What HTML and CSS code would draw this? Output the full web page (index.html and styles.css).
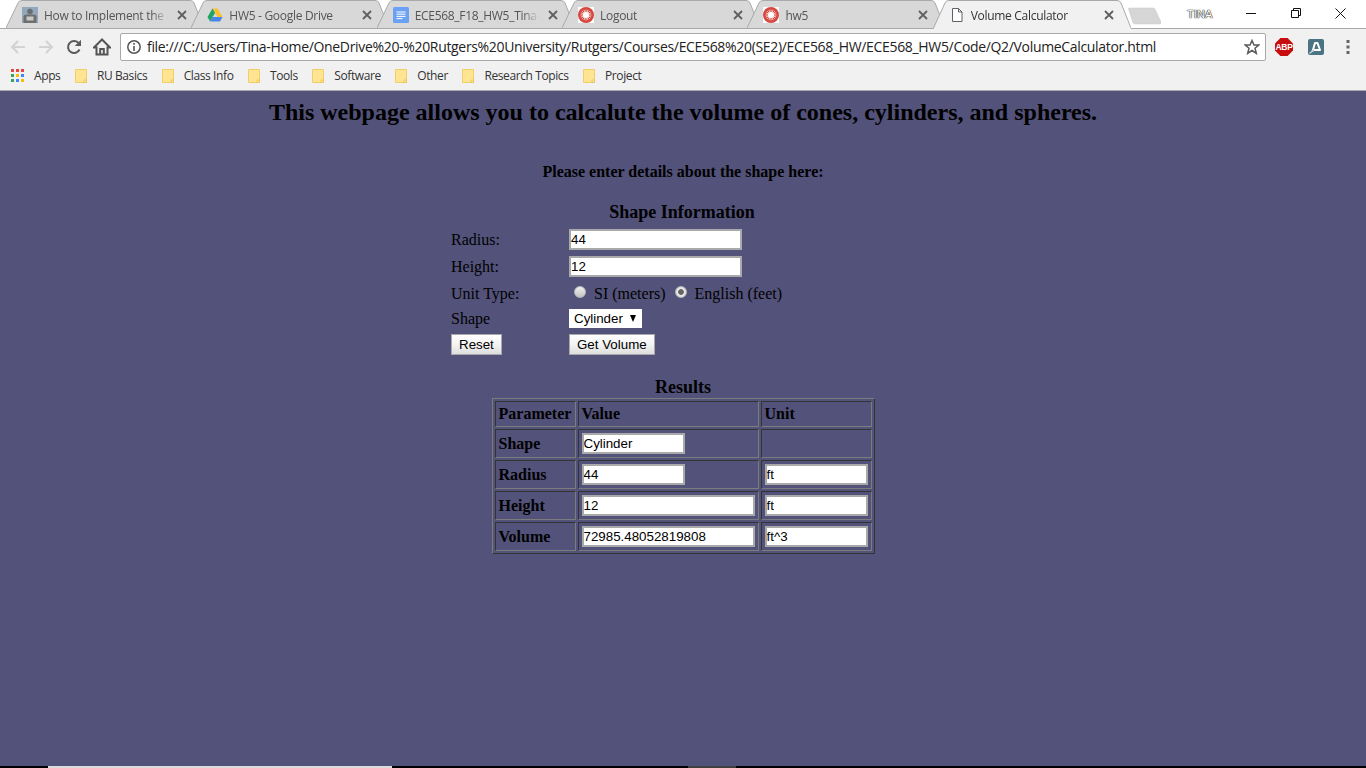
FILE: index.html
```html
<!DOCTYPE html>
<html lang="en">
<head>
<meta charset="utf-8">
<title>Volume Calculator</title>
<link rel="stylesheet" href="styles.css">
</head>
<body>
<svg class="sprite" aria-hidden="true">
  <symbol id="tab-bg" viewBox="0 0 198 29"><path d="M0 28 L12 3 Q13 .5 16 .5 H184 Q187 .5 188 3 L198 28"/></symbol>
  <symbol id="tab-bg-active" viewBox="0 0 198 29"><path d="M0 29 L.5 28 L12 3 Q13 .5 16 .5 H184 Q187 .5 188 3 L198 28 L198.500 29"/></symbol>
  <symbol id="close" viewBox="0 0 10 10"><path d="M1 1 L9 9 M9 1 L1 9" fill="none" stroke="#5f5f5f" stroke-width="1.800"/></symbol>
  <symbol id="rutgers" viewBox="0 0 16 16"><rect width="16" height="16" fill="#fff"/><circle cx="8" cy="8" r="8" fill="#d6483f"/><path d="M8 2.500V13.500M2.500 8H13.500M4.100 4.100L11.900 11.900M11.900 4.100L4.100 11.900M5.900 2.900L10.100 13.100M10.100 2.900L5.900 13.100M2.900 5.900L13.100 10.100M2.900 10.100L13.100 5.900" stroke="#fff" stroke-width=".7"/><circle cx="8" cy="8" r="3" fill="#fff"/></symbol>
  <symbol id="folder" viewBox="0 0 12 14"><path d="M.5 .5H11.500V13.500H.5Z" fill="#ffe591" stroke="#f0cf69"/><path d="M9 11H11.500V13.500H9Z" fill="#ffe591" stroke="#e6c050" stroke-width=".7"/></symbol>
</svg>

<div class="app">
  <header class="tabstrip">
    <div class="tab">
      <svg class="tab-shape"><use href="#tab-bg"/></svg>
      <svg class="favicon" viewBox="0 0 16 16"><rect width="16" height="16" fill="#93a9bb"/><circle cx="8" cy="4.500" r="2.800" fill="#6a6d70"/><path d="M1.500 16V9.500Q1.500 7.500 5 7.500H11Q14.500 7.500 14.500 9.500V16Z" fill="#6c6e70"/><rect x="4.500" y="9.500" width="7" height="4" fill="#c9c9c4"/></svg>
      <span class="tab-title">How to Implement the I</span>
      <svg class="tab-close"><use href="#close"/></svg>
    </div>
    <div class="tab">
      <svg class="tab-shape"><use href="#tab-bg"/></svg>
      <svg class="favicon" viewBox="0 0 16 16"><path d="M5.500 1.500H10.500L15.500 10H10.500Z" fill="#fbc02d"/><path d="M5.500 1.500L.5 10L3 14.500L8 6Z" fill="#1fa463"/><path d="M3 14.500H13L15.500 10H5.500Z" fill="#4a86e8"/></svg>
      <span class="tab-title">HW5 - Google Drive</span>
      <svg class="tab-close"><use href="#close"/></svg>
    </div>
    <div class="tab">
      <svg class="tab-shape"><use href="#tab-bg"/></svg>
      <svg class="favicon" viewBox="0 0 16 16"><rect width="16" height="16" rx="1.500" fill="#6ba1f5"/><path d="M3.500 5H12.500M3.500 7.200H12.500M3.500 9.400H12.500M3.500 11.600H9.500" stroke="#fff"/></svg>
      <span class="tab-title">ECE568_F18_HW5_Tina-</span>
      <svg class="tab-close"><use href="#close"/></svg>
    </div>
    <div class="tab">
      <svg class="tab-shape"><use href="#tab-bg"/></svg>
      <svg class="favicon"><use href="#rutgers"/></svg>
      <span class="tab-title">Logout</span>
      <svg class="tab-close"><use href="#close"/></svg>
    </div>
    <div class="tab">
      <svg class="tab-shape"><use href="#tab-bg"/></svg>
      <svg class="favicon"><use href="#rutgers"/></svg>
      <span class="tab-title">hw5</span>
      <svg class="tab-close"><use href="#close"/></svg>
    </div>
    <div class="tab tab-active">
      <svg class="tab-shape"><use href="#tab-bg-active"/></svg>
      <svg class="favicon" viewBox="0 0 16 16"><path d="M3.500 1.500H9.500L13 5V14.500H3.500Z M9.500 1.500V5H13" fill="#fff" stroke="#5f6368"/></svg>
      <span class="tab-title">Volume Calculator</span>
      <svg class="tab-close"><use href="#close"/></svg>
    </div>
    <svg class="new-tab" viewBox="0 0 33 18"><path d="M1 1 H25 Q26 1 27 2 L33 15 Q33.500 17 32 17 H7 Q5.500 17 5 16 L.5 2 Q.5 1 1 1Z"/></svg>
    <span class="user-name">TINA</span>
    <div class="window-controls">
      <span class="win-btn"><svg width="10" height="10" viewBox="0 0 10 10"><path d="M0 5.500H10" stroke="#111"/></svg></span>
      <span class="win-btn"><svg width="10" height="10" viewBox="0 0 10 10"><path d="M.5 2.500H7.500V9.500H.5Z M2.500 2.500V.5H9.500V7.500H7.500" fill="none" stroke="#111"/></svg></span>
      <span class="win-btn"><svg width="11" height="11" viewBox="0 0 11 11"><path d="M.5 .5L10.500 10.500M10.500 .5L.5 10.500" stroke="#111"/></svg></span>
    </div>
  </header>

  <div class="toolbar">
    <span class="tool"><svg width="16" height="16" viewBox="0 0 16 16"><path d="M15 8H2M8 2L2 8L8 14" fill="none" stroke="#d3d3d3" stroke-width="2"/></svg></span>
    <span class="tool"><svg width="16" height="16" viewBox="0 0 16 16"><path d="M1 8H14M8 2L14 8L8 14" fill="none" stroke="#d3d3d3" stroke-width="2"/></svg></span>
    <span class="tool"><svg width="16" height="16" viewBox="0 0 16 16"><path d="M13.500 10.500A6 6 0 1 1 12.300 3.800" fill="none" stroke="#5a5a5a" stroke-width="2"/><path d="M15 .8V7H8.800Z" fill="#5a5a5a"/></svg></span>
    <span class="tool"><svg width="18" height="18" viewBox="0 0 18 18"><path d="M9 1.500L1 9.500H3.500V16.500H14.500V9.500H17Z M7.200 16.500V11H10.800V16.500" fill="none" stroke="#555" stroke-width="2" stroke-linejoin="miter"/></svg></span>
    <div class="omnibox">
      <svg width="16" height="16" viewBox="0 0 16 16"><circle cx="8" cy="8" r="6.200" fill="none" stroke="#555" stroke-width="1.500"/><path d="M8 7V12M8 4V5.700" stroke="#555" stroke-width="1.600"/></svg>
      <span class="url">file:///C:/Users/Tina-Home/OneDrive%20-%20Rutgers%20University/Rutgers/Courses/ECE568%20(SE2)/ECE568_HW/ECE568_HW5/Code/Q2/VolumeCalculator.html</span>
      <svg width="16" height="16" viewBox="0 0 16 16"><path d="M8 1.500L10 6H14.800L11 9.200L12.300 14.300L8 11.500L3.700 14.300L5 9.200L1.200 6H6Z" fill="none" stroke="#5a5a5a" stroke-width="1.500"/></svg>
    </div>
    <span class="tool tool-ext first-ext">
      <span class="abp">ABP</span>
    </span>
    <span class="tool tool-ext"><svg width="16" height="16" viewBox="0 0 16 16"><rect width="16" height="16" rx="2" fill="#4a7383"/><path d="M4.500 12.500L7 4H9.500L12 11H6" fill="none" stroke="#fff" stroke-width="2" stroke-linejoin="round"/><path d="M1.500 14.500L6 10.500" stroke="#c3d3d9" stroke-width="1.500"/></svg></span>
    <span class="tool tool-ext"><svg width="4" height="14" viewBox="0 0 4 14"><path d="M2 0V3M2 5.500V8.500M2 11V14" stroke="#666" stroke-width="3"/></svg></span>
  </div>

  <nav class="bookmarks">
    <span class="bookmark"><svg class="apps" viewBox="0 0 13 13"><rect width="3" height="3" fill="#e8453c"/><rect x="5" width="3" height="3" fill="#e8453c"/><rect x="10" width="3" height="3" fill="#e8453c"/><rect y="5" width="3" height="3" fill="#34a853"/><rect x="5" y="5" width="3" height="3" fill="#fbbc05"/><rect x="10" y="5" width="3" height="3" fill="#4285f4"/><rect y="10" width="3" height="3" fill="#34a853"/><rect x="5" y="10" width="3" height="3" fill="#4285f4"/><rect x="10" y="10" width="3" height="3" fill="#fbbc05"/></svg>Apps</span>
    <span class="bookmark"><svg class="folder"><use href="#folder"/></svg>RU Basics</span>
    <span class="bookmark"><svg class="folder"><use href="#folder"/></svg>Class Info</span>
    <span class="bookmark"><svg class="folder"><use href="#folder"/></svg>Tools</span>
    <span class="bookmark"><svg class="folder"><use href="#folder"/></svg>Software</span>
    <span class="bookmark"><svg class="folder"><use href="#folder"/></svg>Other</span>
    <span class="bookmark"><svg class="folder"><use href="#folder"/></svg>Research Topics</span>
    <span class="bookmark"><svg class="folder"><use href="#folder"/></svg>Project</span>
  </nav>

  <main class="page">
    <h2 class="page-title">This webpage allows you to calcalute the volume of cones, cylinders, and spheres.</h2>
    <h4 class="page-lead">Please enter details about the shape here:</h4>

    <h3 class="section-title info-title">Shape Information</h3>
    <form class="shape-form">
      <label class="form-label" for="radius">Radius:</label>
      <input class="field field-wide" id="radius" type="text" value="44">
      <label class="form-label" for="height">Height:</label>
      <input class="field field-wide" id="height" type="text" value="12">
      <span class="form-label label-unit">Unit Type:</span>
      <span class="radio-group">
        <input class="radio" type="radio" name="unit" id="si"><label for="si">SI (meters)</label>
        <input class="radio" type="radio" name="unit" id="en" checked><label for="en">English (feet)</label>
      </span>
      <label class="form-label" for="shape">Shape</label>
      <span class="select-wrap">
        <select class="select" id="shape"><option>Cylinder</option><option>Cone</option><option>Sphere</option></select>
      </span>
      <span class="form-cell"><button class="btn" type="reset">Reset</button></span>
      <span class="form-cell"><button class="btn" type="button">Get Volume</button></span>
    </form>

    <h3 class="section-title results-title">Results</h3>
    <table class="results">
      <thead>
        <tr><th class="col-param">Parameter</th><th class="col-value">Value</th><th class="col-unit">Unit</th></tr>
      </thead>
      <tbody>
        <tr><th>Shape</th><td><input class="field field-short" type="text" value="Cylinder"></td><td></td></tr>
        <tr><th>Radius</th><td><input class="field field-short" type="text" value="44"></td><td><input class="field field-short" type="text" value="ft"></td></tr>
        <tr><th>Height</th><td><input class="field field-wide" type="text" value="12"></td><td><input class="field field-short" type="text" value="ft"></td></tr>
        <tr><th>Volume</th><td><input class="field field-wide" type="text" value="72985.48052819808"></td><td><input class="field field-short" type="text" value="ft^3"></td></tr>
      </tbody>
    </table>
  </main>

  <footer class="taskbar-sliver">
    <span class="sliver sliver-a"></span>
    <span class="sliver sliver-b"></span>
    <span class="sliver sliver-c"></span>
    <span class="sliver sliver-d"></span>
    <span class="sliver sliver-e"></span>
  </footer>
</div>
</body>
</html>
```

FILE: styles.css
```css
* { box-sizing: border-box; }
html, body { margin: 0; padding: 0; height: 100%; overflow: hidden; }
body { background: #53527a; font-family: "Liberation Serif", "Times New Roman", serif; color: #000; }
.sprite { display: none; }

.app { display: flex; flex-direction: column; width: 1366px; height: 768px; overflow: hidden; }

/* Tab strip */
.tabstrip {
  display: flex; align-items: flex-start; flex: 0 0 29px; min-height: 0; padding-left: 6px;
  background: #fff; border-bottom: 1px solid #a9a9a9;
  font-family: "Open Sans", "Noto Sans", sans-serif; font-size: 12px; letter-spacing: -.3px;
}
.tab {
  position: relative; flex: 0 0 198px; height: 29px; margin-right: -12.67px;
  display: flex; align-items: center; padding: 1px 16px 0 16px; color: #555;
}
.tab-shape { position: absolute; left: 0; top: 0; width: 198px; height: 29px; fill: #d8d8d8; stroke: #a9a9a9; stroke-width: 1; overflow: visible; }
.tab-active { z-index: 2; color: #333; }
.tab-active .tab-shape { fill: #f1f1f1; }
.favicon { position: relative; flex: 0 0 16px; width: 16px; height: 16px; }
.tab-title {
  position: relative; flex: 0 0 131px; margin-left: 6px; white-space: nowrap;
  -webkit-mask-image: linear-gradient(to right, #000 108px, transparent 124px);
  mask-image: linear-gradient(to right, #000 108px, transparent 124px);
}
.tab-close { position: relative; flex: 0 0 10px; width: 10px; height: 10px; margin-left: 2px; }
.new-tab { flex: 0 0 33px; width: 33px; height: 18px; margin: 7px 0 0 10.17px; fill: #d6d6d6; stroke: #cacaca; stroke-width: .5; }
.user-name {
  margin: 7px 0 0 26px; font-size: 11px; line-height: 14px; font-family: "Liberation Sans", sans-serif; letter-spacing: 0;
  color: #fff; text-shadow: 0 0 1px #222, 0 0 1px #222, 0 0 1px #222;
}
.window-controls { margin-left: auto; display: flex; padding-right: 3px; }
.win-btn { width: 45px; height: 26px; display: flex; align-items: center; justify-content: center; }

/* Toolbar */
.toolbar { display: flex; align-items: center; flex: 0 0 33px; padding: 4px 2px 1px 4px; background: #f1f1f1; }
.tool { flex: 0 0 28px; height: 28px; display: flex; align-items: center; justify-content: center; }
.tool-ext { flex-basis: 32px; }
.first-ext { margin-left: 2px; }
.omnibox {
  flex: 1; height: 28px; margin-left: 4px; padding: 0 5px; display: flex; align-items: center; gap: 5px;
  background: #fff; border: 1px solid #a9a9a9; border-radius: 2px;
  font-family: "Open Sans", "Noto Sans", sans-serif; font-size: 14px; letter-spacing: -.33px; color: #222;
}
.url { flex: 1; white-space: nowrap; overflow: hidden; padding-bottom: 1px; }
.abp {
  width: 18px; height: 18px; display: flex; align-items: center; justify-content: center;
  background: #c70d0d; color: #fff; font: bold 8.5px "Liberation Sans", sans-serif; letter-spacing: -.3px;
  clip-path: polygon(30% 0, 70% 0, 100% 30%, 100% 70%, 70% 100%, 30% 100%, 0 70%, 0 30%);
}

/* Bookmarks */
.bookmarks {
  display: flex; align-items: center; gap: 14.5px; flex: 0 0 29px; padding: 0 0 1px 11px;
  background: #f1f1f1; border-bottom: 1px solid #a9a9a9;
  font-family: "Open Sans", "Noto Sans", sans-serif; font-size: 12px; letter-spacing: -.4px; color: #333;
}
.bookmark { display: flex; align-items: center; gap: 10px; white-space: nowrap; }
.apps { width: 13px; height: 13px; }
.folder { width: 12px; height: 14px; }

/* Page */
.page { flex: 1; min-height: 0; background: #53527a; overflow: hidden; text-align: center; }
.page-title { margin: 8px 0 0; font-size: 24px; line-height: 27px; font-weight: bold; }
.page-lead { margin: 37px 0 0; font-size: 16px; line-height: 18px; font-weight: bold; }
.section-title { font-size: 18px; line-height: 21px; font-weight: bold; margin: 0; }
.info-title { margin-top: 21px; padding-right: 2px; }
.results-title { margin-top: 22px; }

.shape-form {
  display: grid; grid-template-columns: 118px auto; grid-template-rows: 21px 21px 20px 19px 21px;
  row-gap: 6px; align-items: center; justify-items: start;
  width: 464px; margin: 6px auto 0; text-align: left; font-size: 16px;
}
.form-label { line-height: 18px; }
.label-unit { padding-top: 2px; }
.form-cell { display: block; height: 21px; }
.field {
  display: block; height: 21px; padding: 1px 0; background: #fff; border: 2px solid #a9a9a9; border-radius: 0;
  font-family: "Liberation Sans", Arial, sans-serif; font-size: 13.33px; color: #000; outline: none;
}
.field-wide { width: 173px; }
.field-short { width: 103px; }

.radio-group { display: flex; align-items: center; height: 20px; padding-top: 2px; white-space: nowrap; }
.radio {
  appearance: none; -webkit-appearance: none; width: 12px; height: 12px; margin: 0 8px 0 5px; flex: none;
  position: relative; top: -2px; border-radius: 50%; border: 1px solid #b8b8b8;
  background: linear-gradient(#f0f0f0, #c4c4c4);
}
.radio + label + .radio { margin-left: 9px; }
.radio:checked { background: radial-gradient(circle, #666 0, #666 2.500px, #ececec 3.200px, #cfcfcf 100%); }

.select-wrap { position: relative; display: block; width: 73px; height: 19px; }
.select-wrap::after {
  content: ""; position: absolute; right: 6px; top: 6px;
  border-left: 3.5px solid transparent; border-right: 3.5px solid transparent; border-top: 7px solid #000;
}
.select {
  appearance: none; -webkit-appearance: none; display: block; width: 100%; height: 19px; padding: 0 0 0 5px;
  border: 0; border-radius: 0; background: #fff; color: #000;
  font-family: "Liberation Sans", Arial, sans-serif; font-size: 13.33px;
}

.btn {
  display: block; height: 21px; padding: 0 7px; border: 1px solid #a9a9a9; border-radius: 0; color: #000;
  background: linear-gradient(#fff, #f3f3f3 50%, #dedede);
  font-family: "Liberation Sans", Arial, sans-serif; font-size: 13.33px;
}

/* Results table */
.results {
  margin: 0 auto; table-layout: fixed; width: 383px; border-collapse: separate; border-spacing: 2px;
  border: 1px solid; border-color: #7c7c7c #333 #333 #7c7c7c; text-align: left; font-size: 16px;
}
.results th, .results td {
  padding: 3px; border: 1px solid; border-color: #333 #7c7c7c #7c7c7c #333;
  font-weight: bold; line-height: 18px; vertical-align: middle;
}
.col-param { width: 81px; }
.col-value { width: 181px; }
.col-unit { width: 111px; }

/* Clipped taskbar at the bottom edge */
.taskbar-sliver { display: flex; flex: 0 0 2px; background: #000; }
.sliver { display: block; height: 2px; }
.sliver-a { width: 48px; background: #000; }
.sliver-b { width: 344px; background: #dcdcdc; }
.sliver-c { width: 296px; background: #000; }
.sliver-d { width: 48px; background: #3f3f3f; }
.sliver-e { flex: 1; background: #000; }
```
